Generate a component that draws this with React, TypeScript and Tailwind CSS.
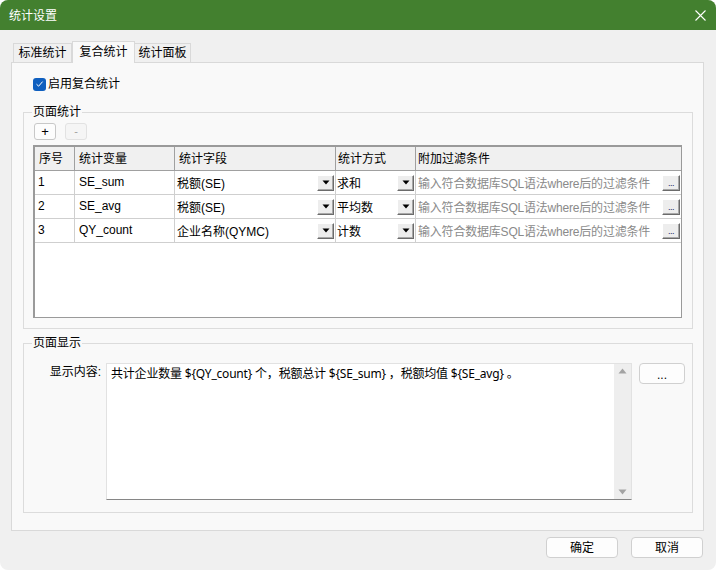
import React from "react";

const rows = [
  { no: "1", v: "SE_sum", f: "税额(SE)", m: "求和" },
  { no: "2", v: "SE_avg", f: "税额(SE)", m: "平均数" },
  { no: "3", v: "QY_count", f: "企业名称(QYMC)", m: "计数" },
];

function DropBtn() {
  return (
    <div className="w-[17px] h-[16px] shrink-0 bg-[#ededed] border border-t-white border-l-white border-r-[#6b6b6b] border-b-[#6b6b6b] shadow-[inset_-1px_-1px_0_#a8a8a8] flex items-center justify-center">
      <svg width="8" height="5" viewBox="0 0 8 5">
        <path d="M0.5 0.5h7L4 4.5z" fill="#000" />
      </svg>
    </div>
  );
}

function DotBtn() {
  return (
    <div className="w-[18px] h-[16px] shrink-0 bg-[#ededed] border border-t-white border-l-white border-r-[#6b6b6b] border-b-[#6b6b6b] shadow-[inset_-1px_-1px_0_#a8a8a8] flex items-end justify-center pb-[2px]">
      <span className="text-[9px] leading-[9px] text-[#202060] tracking-[-0.5px]">...</span>
    </div>
  );
}

export default function App() {
  return (
    <div className="w-[716px] h-[570px] bg-white font-['Liberation_Sans','Noto_Sans_CJK_SC',sans-serif] text-[12px] text-black">
      <div className="w-full h-full rounded-[8px] overflow-hidden bg-[#f0f0f0] flex flex-col">
        {/* Title bar */}
        <div className="h-[30px] shrink-0 bg-[#43802f] flex items-center justify-between pl-[9px] pr-[10px]">
          <span className="text-white text-[12px] leading-[14px] font-['Noto_Sans_CJK_SC',sans-serif]">统计设置</span>
          <svg width="11" height="11" viewBox="0 0 11 11">
            <path d="M0.5 0.5L10.5 10.5M10.5 0.5L0.5 10.5" stroke="#fff" strokeWidth="1.1" />
          </svg>
        </div>

        {/* Tabs */}
        <div className="h-[32px] shrink-0 flex items-end pl-[13px] relative z-10">
          <div className="w-[59px] h-[19px] border border-b-0 border-[#d9d9d9] bg-[#f0f0f0] flex items-center justify-center leading-[14px]">
            标准统计
          </div>
          <div className="w-[63px] h-[22px] -mb-px border border-b-0 border-[#d9d9d9] bg-[#f9f9f9] flex items-start pt-[3px] justify-center leading-[14px]">
            复合统计
          </div>
          <div className="w-[56px] h-[19px] border border-b-0 border-l-0 border-[#d9d9d9] bg-[#f0f0f0] flex items-center justify-center leading-[14px]">
            统计面板
          </div>
        </div>

        {/* Panel */}
        <div className="ml-[11px] mr-[12px] h-[469px] shrink-0 border border-[#d9d9d9] bg-[#f9f9f9] flex flex-col">
          <div className="mt-[14px] ml-[21px] flex items-center gap-[2px] h-[14px]">
            <div className="w-[13px] h-[13px] rounded-[3px] bg-[#0f5fbf] flex items-center justify-center">
              <svg width="9" height="8" viewBox="0 0 9 8">
                <path d="M1.5 4.2L3.6 6.2L7.6 1.6" stroke="#fff" strokeWidth="1" fill="none" />
              </svg>
            </div>
            <span className="leading-[14px]">启用复合统计</span>
          </div>

          {/* Group 1 */}
          <fieldset className="mt-[14px] ml-[11px] mr-[10px] border border-[#dcdcdc] pb-[10px]">
            <legend className="ml-[8px] px-[1px] leading-[14px] text-[12px]">页面统计</legend>
            <div className="flex gap-[9px] ml-[10px] mt-[4px]">
              <div className="w-[22px] h-[17px] rounded-[3px] border border-[#c8c8c8] bg-[#fdfdfd] flex items-center justify-center text-[13px] leading-[13px]">
                +
              </div>
              <div className="w-[22px] h-[17px] rounded-[3px] border border-[#e2e2e2] bg-[#f5f5f5] flex items-center justify-center text-[11px] leading-[11px] text-[#a0a0a0]">
                -
              </div>
            </div>
            <div className="mt-[5px] ml-[9px] mr-[10px] h-[173px] border-t-2 border-l-2 border-r border-b border-[#9a9a9a] bg-white flex flex-col">
              <div className="h-[24px] flex bg-[#f0f0f0] border-b border-[#a0a0a0] leading-[14px]">
                <div className="w-[40px] border-r border-[#a0a0a0] pl-[4px] flex items-center">序号</div>
                <div className="w-[100px] border-r border-[#a0a0a0] pl-[4px] flex items-center">统计变量</div>
                <div className="w-[161px] border-r border-[#a0a0a0] pl-[4px] flex items-center">统计字段</div>
                <div className="w-[80px] border-r border-[#a0a0a0] pl-[2px] flex items-center">统计方式</div>
                <div className="flex-1 pl-[2px] flex items-center">附加过滤条件</div>
              </div>
              {rows.map((r) => (
                <div key={r.no} className="h-[24px] flex border-b border-[#cfcfcf] leading-[14px]">
                  <div className="w-[40px] border-r border-[#cfcfcf] pl-[3px] flex items-center pb-[2px]">{r.no}</div>
                  <div className="w-[100px] border-r border-[#cfcfcf] pl-[4px] flex items-center pb-[2px]">{r.v}</div>
                  <div className="w-[161px] border-r border-[#cfcfcf] pl-[2px] pr-[1px] flex items-center justify-between">
                    <span className="pt-[3px]">{r.f}</span>
                    <DropBtn />
                  </div>
                  <div className="w-[80px] border-r border-[#cfcfcf] pl-[1px] pr-[1px] flex items-center justify-between">
                    <span className="pt-[2px]">{r.m}</span>
                    <DropBtn />
                  </div>
                  <div className="flex-1 pl-[2px] pr-[1px] flex items-center justify-between">
                    <span className="pt-[2px] text-[#8a8a8a] tracking-[-0.2px]">输入符合数据库SQL语法where后的过滤条件</span>
                    <DotBtn />
                  </div>
                </div>
              ))}
            </div>
          </fieldset>

          {/* Group 2 */}
          <fieldset className="mt-[7px] ml-[11px] mr-[10px] border border-[#dcdcdc] pb-[12px]">
            <legend className="ml-[8px] px-[1px] leading-[14px] text-[12px]">页面显示</legend>
            <div className="flex mt-[13px]">
              <div className="w-[77px] text-right leading-[14px] pt-[2px]">显示内容:</div>
              <div className="ml-[5px] w-[526px] h-[137px] bg-white border border-[#e2e2e2] border-b-[#868686] flex">
                <div className="flex-1 pl-[4px] pt-[2px] leading-[16px] font-['Noto_Sans','Noto_Sans_CJK_SC',sans-serif] text-[12px] tracking-[-0.2px]">
                  共计企业数量 ${"{"}QY_count{"}"} 个，税额总计 ${"{"}SE_sum{"}"} ，税额均值 ${"{"}SE_avg{"}"} 。
                </div>
                <div className="w-[17px] bg-[#eeeeee] flex flex-col items-center justify-between py-[4px]">
                  <svg width="9" height="6" viewBox="0 0 9 6">
                    <path d="M4.5 0.5L8.5 5.5H0.5z" fill="#a3a3a3" />
                  </svg>
                  <svg width="9" height="6" viewBox="0 0 9 6">
                    <path d="M0.5 0.5H8.5L4.5 5.5z" fill="#a3a3a3" />
                  </svg>
                </div>
              </div>
              <div className="ml-[7px] w-[46px] h-[21px] rounded-[4px] border border-[#d0d0d0] bg-[#fdfdfd] flex items-center justify-center leading-[12px] pt-[2px]">
                ...
              </div>
            </div>
          </fieldset>
        </div>

        {/* Bottom buttons */}
        <div className="flex justify-end gap-[13px] pr-[13px] mt-[6px]">
          <div className="w-[72px] h-[21px] rounded-[4px] border border-[#d0d0d0] bg-[#fdfdfd] flex items-center justify-center leading-[14px]">
            确定
          </div>
          <div className="w-[72px] h-[21px] rounded-[4px] border border-[#d0d0d0] bg-[#fdfdfd] flex items-center justify-center leading-[14px]">
            取消
          </div>
        </div>
      </div>
    </div>
  );
}
